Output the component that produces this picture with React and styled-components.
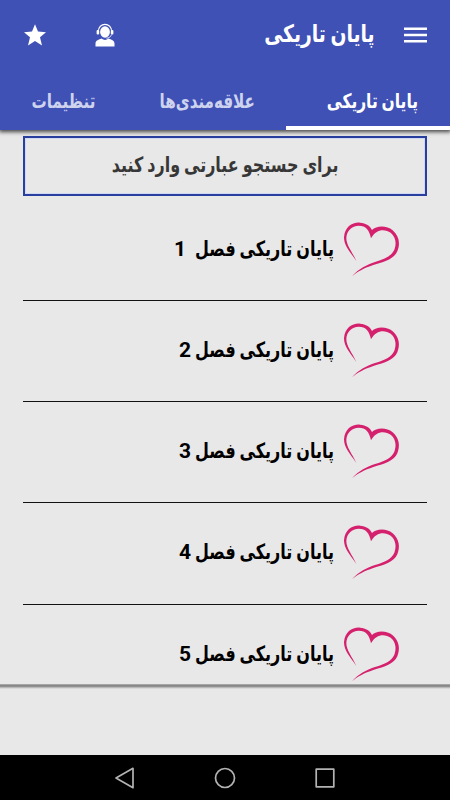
import React from "react";
import styled, { createGlobalStyle } from "styled-components";

const Global = createGlobalStyle`
  * { box-sizing: border-box; }
  body { margin: 0; background: #e8e8e8; font-family: Roboto, "DejaVu Sans", sans-serif; font-weight: 700; }
`;
const Screen = styled.div`
  width: 450px; height: 800px; overflow: hidden; display: flex; flex-direction: column;
`;
const Header = styled.header`
  height: 130px; flex: none; background: #3f51b5; color: #fff; z-index: 1;
  box-shadow: 0 1px 4px 1px rgba(0, 0, 0, 0.7);
  display: flex; flex-direction: column;
`;
const AppBar = styled.div`
  height: 74px; display: flex; align-items: center; padding: 0 22px 4px 22px;
  svg { display: block; flex: none; }
`;
const Actions = styled.div`
  display: flex; gap: 44px; margin-right: auto; align-items: center;
`;
const Label = styled.span`
  direction: rtl; white-space: pre; display: block; flex: none;
  font-size: ${(p) => p.$size}px; line-height: 30px;
  transform: scaleX(${(p) => p.$sx || 1});
  transform-origin: ${(p) => p.$origin || "right"};
`;
const Title = styled.h1`
  margin: 0 27px 2px 0; font-size: inherit; display: flex; justify-content: flex-end;
`;
const Tabs = styled.nav`
  flex: 1; display: grid; direction: rtl; grid-template-columns: 164px 158px 128px;
`;
const Tab = styled.div`
  display: flex; align-items: center; justify-content: flex-start;
  padding: 2px ${(p) => p.$pad}px 0 0;
  color: ${(p) => (p.$active ? "#fff" : "#ced3ee")};
  border-bottom: 4px solid ${(p) => (p.$active ? "#fff" : "transparent")};
`;
const Main = styled.main`
  height: 554px; flex: none; padding: 6px 23px 0; overflow: hidden;
`;
const Search = styled.div`
  height: 60px; border: 2px solid #283f9f; display: flex; align-items: center; justify-content: center;
  box-shadow: inset 0 0 0 1px #d0d8f3; color: #373737; padding-bottom: 2px;
`;
const Row = styled.div`
  height: 101.25px; display: flex; direction: rtl; padding: 3px 17px 0 0;
  border-bottom: 1px solid #111;
  svg { flex: none; display: block; margin-top: 7px; }
`;
const ChapterName = styled(Label)`
  width: 138px; margin: 31px -4px 0 0;
`;
const ChapterNumber = styled.span`
  font-size: 21px; line-height: 30px; margin: 31px ${(p) => p.$gap}px 0 0;
`;
const List = styled.div`
  padding-top: 3.5px;
`;
const Footer = styled.div`
  height: 71px; flex: none;
  background: linear-gradient(#b5b5b5, #777 2px, #aaa 3px, #e8e8e8 5px);
`;
const NavBar = styled.footer`
  height: 45px; flex: none; background: #000; display: flex; justify-content: center; align-items: center; gap: 76px;
`;

const Heart = () => (
  <svg width="80" height="80" viewBox="0 0 240 240">
    <path fill="#d5216d" d="M79 153C60 125 42 108 42 82C44 50 68 36 90 38C108 39 121 48 126 60C138 47 170 45 188 61C208 78 211 102 202 124C192 148 160 156 130 165C103 174 84 184 66 199C85 177 112 163 135 156C165 147 184 138 193 119C201 98 196 80 182 68C165 56 138 56 123 85C118 60 108 47 86 47C66 47 50 62 49 84C49 106 66 124 79 153Z" />
  </svg>
);
const Star = () => (
  <svg width="26" height="26" viewBox="0 0 26 26" fill="#fff">
    <path d="M13 2.2L16 9.6L24 10.2L18 15.3L20 23.5L13 19L6 23.5L8 15.3L2 10.2L10 9.6Z" />
  </svg>
);
const Support = () => (
  <svg width="26" height="26" viewBox="0 0 26 26" fill="#fff">
    <ellipse cx="13" cy="10" rx="4.9" ry="5.8" />
    <path d="M6.2 10C6.2 -0.2 19.8 -0.2 19.8 10" fill="none" stroke="#fff" strokeWidth="1.1" />
    <rect x="4.6" y="8" width="2.6" height="4.4" rx="1" />
    <rect x="18.8" y="8" width="2.6" height="4.4" rx="1" />
    <path d="M19.8 12.5Q18.5 16 14.5 16.4" fill="none" stroke="#fff" strokeWidth="0.8" />
    <path d="M3.5 24.5V21.5C3.5 18.5 7 17.8 9.4 16.6Q13 19.5 16.6 16.6C19 17.8 22.5 18.5 22.5 21.5V24.5Z" />
  </svg>
);
const Menu = () => (
  <svg width="26" height="20" viewBox="0 0 26 20" stroke="#fff" strokeWidth="2.4">
    <path d="M2 3.7H25M2 10H25M2 16.3H25" />
  </svg>
);
const NavIcon = ({ children }) => (
  <svg width="24" height="24" viewBox="0 0 24 24" fill="none" stroke="#b3b3b3" strokeWidth="1.7" strokeLinejoin="round">{children}</svg>
);

const chapters = [
  { number: 1, gap: 10 },
  { number: 2, gap: 5 },
  { number: 3, gap: 5 },
  { number: 4, gap: 5 },
  { number: 5, gap: 5 },
];

export default function App() {
  return (
    <Screen>
      <Global />
      <Header>
        <AppBar>
          <Actions><Star /><Support /></Actions>
          <Title><Label $size={24} $sx={0.78}>پایان تاریکی</Label></Title>
          <Menu />
        </AppBar>
        <Tabs>
          <Tab $active $pad={32}><Label $size={20} $sx={0.773}>پایان تاریکی</Label></Tab>
          <Tab $pad={31}><Label $size={20} $sx={0.757}>علاقه‌مندی‌ها</Label></Tab>
          <Tab $pad={33}><Label $size={20} $sx={0.757}>تنظیمات</Label></Tab>
        </Tabs>
      </Header>
      <Main>
        <Search><Label $size={21} $sx={0.76} $origin="center">برای جستجو عبارتی وارد کنید</Label></Search>
        <List>
          {chapters.map(({ number, gap }) => (
            <Row key={number}>
              <Heart />
              <ChapterName $size={21} $sx={0.762}>پایان تاریکی فصل</ChapterName>
              <ChapterNumber $gap={gap}>{number}</ChapterNumber>
            </Row>
          ))}
        </List>
      </Main>
      <Footer />
      <NavBar>
        <NavIcon><path d="M3 12L20 2.3V21.7Z" /></NavIcon>
        <NavIcon><circle cx="12" cy="12" r="9.5" /></NavIcon>
        <NavIcon><rect x="3.2" y="3.2" width="17.6" height="17.6" /></NavIcon>
      </NavBar>
    </Screen>
  );
}
